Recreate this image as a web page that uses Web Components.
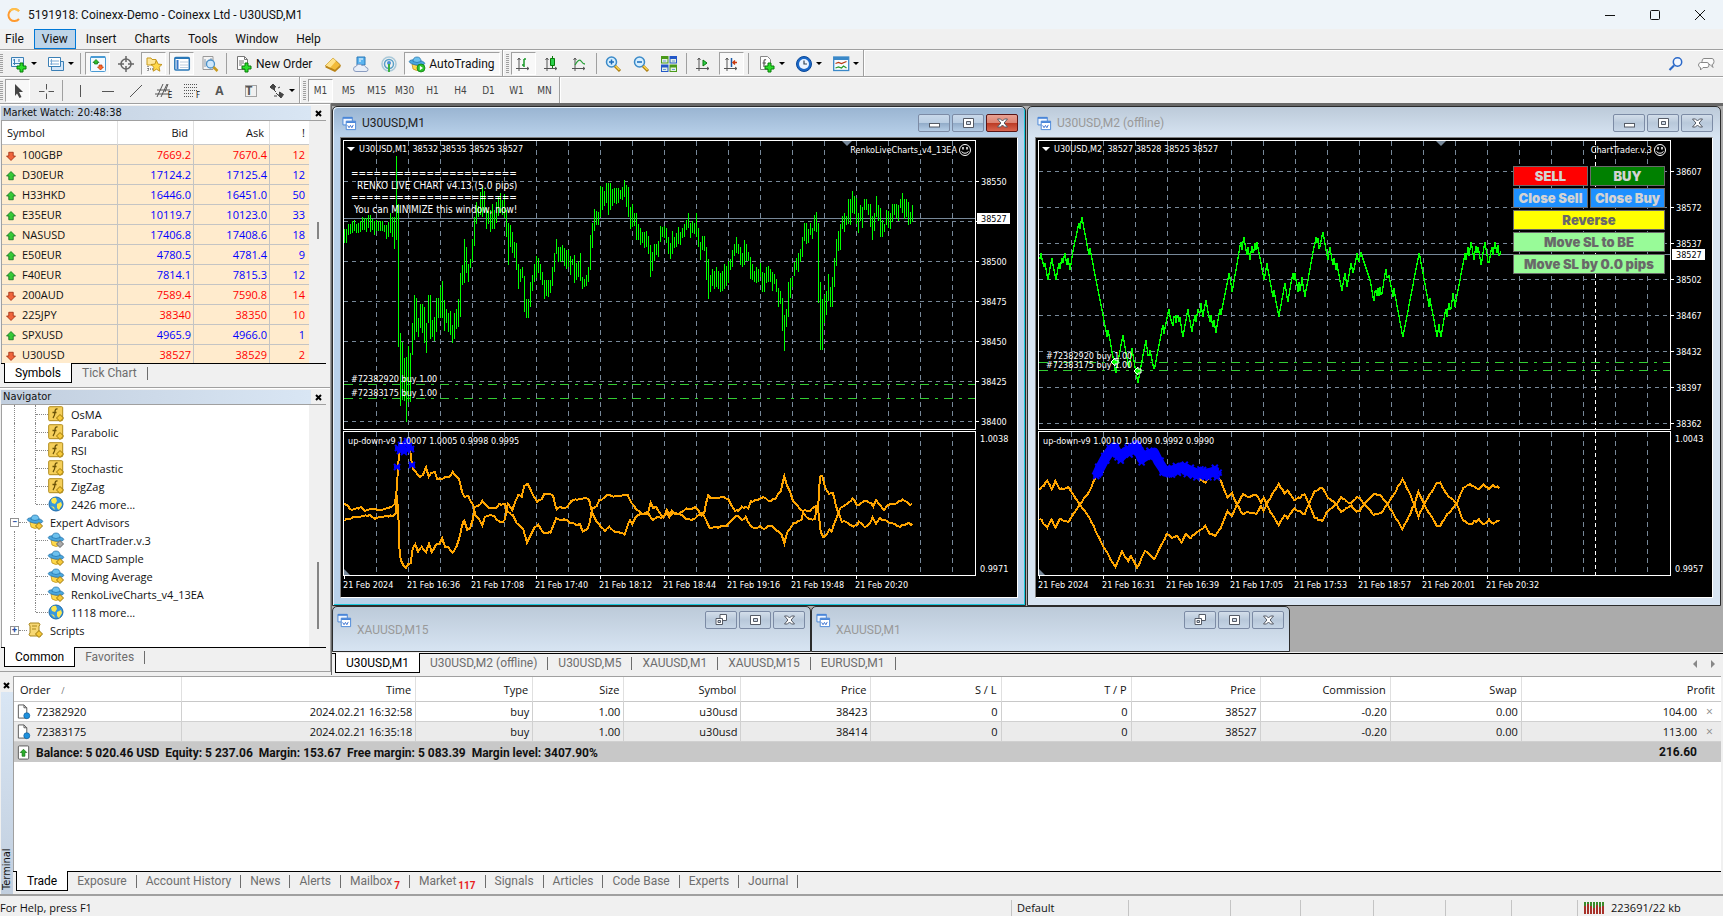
<!DOCTYPE html>
<html lang="en">
<head>
<meta charset="utf-8">
<title>5191918: Coinexx-Demo - Coinexx Ltd - U30USD,M1</title>
<style>
  html, body { margin: 0; height: 100%; }
  body { background: #f0f0f0; overflow: hidden; }
</style>
</head>
<body>
<trading-app></trading-app>
<script>
const UI = 'Roboto,"Open Sans",sans-serif';
const DATA = '"Open Sans","Noto Sans",sans-serif';
const TAHOMA = '"DejaVu Sans Condensed","DejaVu Sans",sans-serif';

function component(name, css, html, setup) {
  customElements.define(name, class extends HTMLElement {
    constructor() {
      super();
      this.attachShadow({ mode: 'open' });
    }
    connectedCallback() {
      if (this.shadowRoot.childNodes.length) return;
      const body = typeof html === 'function' ? html(this) : html;
      const t = document.createElement('template');
      t.innerHTML = `<style>*{box-sizing:border-box}button{font:inherit;color:inherit;border:0;padding:0;margin:0;background:none}${css}</style>${body}`;
      this.shadowRoot.append(t.content.cloneNode(true));
      if (setup) setup(this, this.shadowRoot);
    }
  });
}

/* ---------- icons ---------- */
const axes = '<path d="M4 2v13M1 12.500h13M2.500 4L4 2l1.500 2M12 11l2 1.500-2 1.500" fill="none" stroke="#555"/>';
const plus = '<path d="M9 7h3v3h3v3h-3v3h-3v-3h-3v-3h3z" fill="#2be02b" stroke="#087a08"/>';
const hat = '<path d="M3 8q5 3 10 0l-1 5q-4 3-8 0z" fill="#ffd84a" stroke="#b78a10" stroke-width=".7"/><ellipse cx="8" cy="6.500" rx="7.800" ry="2.600" transform="rotate(8 8 6.500)" fill="#4aa6dc" stroke="#1e6ea8" stroke-width=".7"/><path d="M4 5.500q0-4.500 4-4.500t4 4.500q-4 2-8 0z" fill="#6cc1ee" stroke="#1e6ea8" stroke-width=".7"/>';
const chartWin = '<path d="M1 1.500h10v8H1z" fill="#eef5ff" stroke="#4a86d8"/><path d="M1 2h10" stroke="#4a86d8" stroke-width="2"/><path d="M4.500 5.500h10v9h-10z" fill="#fff" stroke="#4a86d8"/><path d="M4.500 6.500h10" stroke="#4a86d8" stroke-width="2"/><path d="M6 10l1.500 2.500 1.500-2.500 1.500 2.500 1.500-3" fill="none" stroke="#3a70d0"/>';
const glass = '<circle cx="6.500" cy="6" r="5" fill="#d6efff" stroke="#3b8ac8" stroke-width="1.500"/><path d="M10 10l5 5" stroke="#a87a10" stroke-width="3"/><path d="M10.500 10l4 4" stroke="#ffd84a" stroke-width="1.500"/>';
const ICONS = {
  logo: '<path d="M13 4.200A6 6 0 1 0 13 12" fill="none" stroke="#ff9a2e" stroke-width="2"/><path d="M4 3.700A6 6 0 0 1 13 4.200" fill="none" stroke="#ffc04a" stroke-width="2"/>',
  newchart: '<path d="M.5 1.500h12v9H.5z" fill="#e8f4ff" stroke="#3b7fb5"/><path d="M3.500 3v6M2 7.500h9M2 4h2M8 3v3" stroke="#3b7fb5"/>' + plus,
  profiles: '<path d="M3.500 5.500h12v9h-12z" fill="#d4e6f8" stroke="#3b7fb5"/><path d="M.5 1.500h12v9H.5z" fill="#fff" stroke="#3b7fb5"/><path d="M3.500 3v6M2 8h9M2 5h9" stroke="#7aa9d4"/>',
  market: '<rect x=".5" y=".5" width="15" height="15" rx="1" fill="#f4faff" stroke="#4a9bd4"/><path d="M1 1h14" stroke="#4a9bd4" stroke-width="2"/><path d="M6 3.500l3 3-1.500 0v1.500h-3V6.500H3z" fill="#2bc02b" stroke="#0a6a0a" stroke-width=".7"/><path d="M10.500 14l-3-3h1.500V9h3v2h1.500z" fill="#ff6a2a" stroke="#b43508" stroke-width=".7"/>',
  cross: '<circle cx="8" cy="8" r="5" fill="none" stroke="#666" stroke-width="1.500"/><path d="M8 0v6M8 10v6M0 8h6M10 8h6" stroke="#666" stroke-width="1.500"/>',
  navstar: '<path d="M1 2h4l1 1.500h4V9H1z" fill="#ffe79a" stroke="#c79a1e"/><path d="M2 10v6M2 13h5" stroke="#444" stroke-dasharray="1 1"/><path d="M10.500 4.500l1.600 3.600 3.900.4-2.900 2.700.8 4-3.400-2-3.400 2 .8-4L5 8.500l3.900-.4z" fill="#ffd84a" stroke="#b8860b" stroke-width=".8"/>',
  terminal: '<rect x=".8" y="1.500" width="14.500" height="12.500" rx="1" fill="#fff" stroke="#2a78b8" stroke-width="1.500"/><path d="M1 2.500h14" stroke="#2a78b8"/><path d="M2.500 4h2v9h-2z" fill="#3a78c8"/><path d="M6 6h8M6 9h8M6 11.500h8" stroke="#bcd"/>',
  tester: '<path d="M1 .5h10v13H1z" fill="#f4f4f4" stroke="#999"/><path d="M3 3v8M5 5v5M9 2v4" stroke="#89a"/><circle cx="8.500" cy="8" r="4" fill="#cfe8fb" stroke="#4a90c8" stroke-width="1.300"/><path d="M11.500 11l4 4" stroke="#c79a1e" stroke-width="2.500"/>',
  order: '<path d="M1.500.5h7l3 3v10h-10z" fill="#fff" stroke="#777"/><path d="M8.500.5v3h3M3 5h5M3 7h5M3 9h3" fill="none" stroke="#777"/>' + plus,
  gold: '<path d="M.5 9.500L8 2l7.500 7L10 14.500z" fill="#f2bb3a" stroke="#a87a10" stroke-width=".8"/><path d="M.5 9.500L8 2l3 3-6 7z" fill="#ffe28a"/><path d="M.5 9.500v2L10 16l5.500-5v-2L10 14z" fill="#b98216"/>',
  cloud: '<path d="M4 1h8v8H4z" fill="#5ab4f0" stroke="#2a78b8"/><path d="M6 3h4M6 5h2" stroke="#fff"/><path d="M3 15.500a2.500 2.500 0 0 1 0-5 3.500 3.500 0 0 1 6-1 3 3 0 0 1 4 2 2 2 0 0 1 0 4z" fill="#e8eef8" stroke="#8a9cc0"/>',
  signal: '<circle cx="8" cy="8" r="7" fill="none" stroke="#a9c8d8" stroke-width="1.500"/><circle cx="8" cy="8" r="4.500" fill="none" stroke="#5aa0c8" stroke-width="1.500"/><circle cx="8" cy="7" r="2" fill="#4a90d8"/><path d="M8 8v8" stroke="#3cb043" stroke-width="2"/>',
  auto: hat + '<circle cx="12" cy="12" r="4" fill="#2bc02b" stroke="#0a7a0a" stroke-width=".7"/><path d="M10.800 9.800l3.200 2.200-3.200 2.200z" fill="#fff"/>',
  bars: axes + '<path d="M9 3v8M11 3h-2M7 9h2" stroke="#1a9a2a" stroke-width="1.500" fill="none"/>',
  candles: axes + '<path d="M9.500 0v12" stroke="#0a7a0a"/><path d="M7.500 2.500h4v7h-4z" fill="#2bd04b" stroke="#0a7a0a"/>',
  line: axes + '<path d="M4 9q4-7 6-4t4 3" fill="none" stroke="#2aa03a" stroke-width="1.300"/>',
  zoomin: glass + '<path d="M4 6h5M6.500 3.500v5" stroke="#1a6ab8" stroke-width="1.500"/>',
  zoomout: glass + '<path d="M4 6h5" stroke="#1a6ab8" stroke-width="1.500"/>',
  tile: '<path d="M0 0h7.500v7.500H0z" fill="#4a9a1a"/><path d="M8.500 0H16v7.500H8.500z" fill="#2458c8"/><path d="M0 8.500h7.500V16H0z" fill="#2458c8"/><path d="M8.500 8.500H16V16H8.500z" fill="#4a9a1a"/><path d="M1 3h5.500v3.500H1zM9.500 3H15v3.500H9.500zM1 11.500h5.500V15H1zM9.500 11.500H15V15H9.500z" fill="#e4f0e4"/><path d="M2 5h3M11 5h3M2 13.500h3M11 13.500h3" stroke="#6a9ad8"/>',
  scroll: axes + '<path d="M8 4l4 3-4 3z" fill="#2bd04b" stroke="#0a7a0a"/>',
  shift: axes + '<path d="M8.500 2v9" stroke="#1a5aa8" stroke-width="1.500"/><path d="M14 6.500h-4M12 4.500l-2 2 2 2" fill="none" stroke="#c83a10" stroke-width="1.500"/>',
  indicators: '<path d="M1.500.5h7l3 3v10h-10z" fill="#fff" stroke="#888"/><path d="M7 4q-2-1-2 1.500V11M3.500 7H7" fill="none" stroke="#555" stroke-width="1.200"/>' + plus,
  clock: '<circle cx="8" cy="8" r="7.500" fill="#1a68c8" stroke="#0a4898"/><circle cx="8" cy="8" r="5" fill="#eaf4ff"/><path d="M8 4.500V8h3" fill="none" stroke="#345" stroke-width="1.200"/>',
  template: '<rect x=".7" y="1" width="15" height="13.500" fill="#f8fbff" stroke="#3a88c8" stroke-width="1.300"/><path d="M1 2.500h14" stroke="#3a88c8" stroke-width="3"/><path d="M2.500 7.500l3-1 3 1 5-2" fill="none" stroke="#b83a10" stroke-width="1.200"/><path d="M2.500 12l3-1 3 1 2-2 3 2" fill="none" stroke="#2a9a2a" stroke-width="1.200"/>',
  cursor: '<path d="M5 1l8 8H9l2.500 5-2 1L7 10.500 5 13z" fill="#444"/>',
  thincross: '<path d="M8.500 1v5.500M8.500 10.500V16M1 8.500h5.500M10.500 8.500H16" stroke="#555" fill="none"/>',
  vline: '<path d="M8.500 2v12" stroke="#555"/>', hline: '<path d="M2 8.500h12" stroke="#555"/>',
  diag: '<path d="M2 14L14 2" stroke="#555" fill="none"/>',
  channel: '<path d="M0 11h14M2 7h13M2 14L8 1M6 14l6-13M10 9l3-8" stroke="#555" fill="none"/>',
  fibo: '<path d="M1 1.500h14M1 4.500h14M1 7.500h14M1 10.500h9M1 13.500h9" stroke="#555" stroke-dasharray="1 1"/>',
  textbox: '<path d="M2.500 2.500h11v11h-11z" fill="none" stroke="#555" stroke-dasharray="1 1"/>',
  arrows: '<path d="M4 1l3 3H5.500v3L2 5 1 4zM12 15l-3-3h1.500V9l4 2.500zM5 7l2 2M9 12l-2-2" fill="#444" stroke="#444"/><path d="M9 5l2-1M5 13l3 0" stroke="#444"/>',
  find: '<circle cx="9.500" cy="6" r="4.200" fill="#f4f8ff" stroke="#2a68c8" stroke-width="1.500"/><path d="M6 9.500L1.500 14" stroke="#2a68c8" stroke-width="2.200"/>',
  chat: '<path d="M6 2.500h8q2 0 2 3t-2 3l1 3-3-3H6q-2 0-2-3t2-3z" fill="#fafafa" stroke="#888"/><path d="M2.500 6.500H9q2 0 2 2.500t-2 2.500H5L2.500 14v-2.500Q.5 11 .5 9t2-2.500z" fill="#fff" stroke="#888"/>',
  up: '<path d="M8 2l6 6h-3v5H5V8H2z" fill="#37c837" stroke="#0a6a1a"/>',
  down: '<path d="M8 14l6-6h-3V3H5v5H2z" fill="#f0643a" stroke="#98240a"/>',
  indicator: '<rect x=".7" y=".7" width="14" height="14" rx="1" fill="#f5cf5a" stroke="#b08a1a"/><path d="M9.500 3q-2.500-.5-2.500 3T5 12M4.500 6.500h4" fill="none" stroke="#6a5208" stroke-width="1.300"/><path d="M12 8.500l3.500 3.500-3.500 3.500L8.500 12z" fill="#f7c93a" stroke="#9a7608"/>',
  globe: '<circle cx="8" cy="8" r="7" fill="#3a98dc" stroke="#1a68a8"/><path d="M3 4q2-3 5-2l1 3-2 3-3-1zM9 8l4-2 1 3-3 5-2-2zM3 10l3 1 1 3z" fill="#ffe84a"/>',
  expert: hat + '<path d="M12 8.500l3.500 3.500-3.500 3.500L8.500 12z" fill="#f7c93a" stroke="#9a7608"/>',
  expertoff: hat + '<path d="M12 8.500l3.500 3.500-3.500 3.500L8.500 12z" fill="#aaa" stroke="#666"/>',
  script: '<path d="M3 1h9q2 2 0 3v7l2 3H3q-2-2 0-3V4Q1 2 3 1z" fill="#f7d874" stroke="#a8861e"/><path d="M5 4h5M5 7h4" stroke="#a8861e"/><path d="M12 8.500l3.500 3.500-3.500 3.500L8.500 12z" fill="#f7c93a" stroke="#9a7608"/>',
  chart: chartWin,
  doc: '<path d="M2.500 1h6l3 3v11h-9z" fill="#fff" stroke="#555"/><path d="M8.500 1v3h3" fill="none" stroke="#555"/><circle cx="11.500" cy="12.500" r="3.200" fill="#1e90dc" stroke="#0a5a98" stroke-width=".7"/>',
  balance: '<rect x="2.500" y="1" width="11" height="14" rx="1" fill="#fff" stroke="#555"/><path d="M8 4.500l3.500 3.500H9.500v4h-3V8H4.500z" fill="#2bb02b" stroke="#0a6a0a" stroke-width=".7"/>',
  smile: '<circle cx="8" cy="8" r="5.500" fill="none" stroke="#fff"/><path d="M6 5v2.500M10 5v2.500" stroke="#fff" stroke-width="1.500"/><path d="M4.500 9.500q3.500 3.500 7 0" fill="none" stroke="#fff"/>',
  min: '<rect x="3.500" y="8.500" width="10" height="3.500" fill="#fff" stroke="#555b66"/>',
  max: '<path d="M3.500 3.500h10v9h-10z" fill="#fff" stroke="#555b66"/><path d="M6.500 6.500h4v3h-4z" fill="#cfdae8" stroke="#555b66"/>',
  restore: '<path d="M7 2.500h6.500v6H7z" fill="#fff" stroke="#555b66"/><path d="M3 6.500h6.500v6H3z" fill="#fff" stroke="#555b66"/><path d="M5 8.500h2.500v2H5z" fill="#cfdae8" stroke="#555b66"/>',
  close: '<path d="M3.500 4h3l2 2 2-2h3l-3.400 4 3.400 4h-3l-2-2-2 2h-3l3.400-4z" fill="#fff" stroke="#555b66"/>',
  traffic: '<path d="M1 2v12M4 2v12M7 2v12M10 2v12M13 2v12M16 2v12M19 2v12" stroke="#3a8a2a" stroke-width="2"/><path d="M1 6v8M4 4v10M7 6v8M10 8v6M13 5v9M16 7v7M19 6v8" stroke="#a8322a" stroke-width="2"/>'
};
component('mt-icon', ':host{display:inline-block;width:16px;height:16px;flex:none}svg{display:block;width:100%;height:100%;overflow:visible}',
  el => `<svg viewBox="0 0 ${el.getAttribute('name') === 'traffic' ? 20 : 16} 16" aria-hidden="true">${ICONS[el.getAttribute('name')] || ''}</svg>`);

/* ---------- title bar and menu ---------- */
component('title-bar', `
  :host{display:flex;height:29px;align-items:center;background:#eef4f9;font:12px ${UI};color:#111;padding:0 1px 0 6px}
  span{margin-left:6px;flex:1}
  button{width:45px;height:28px;display:grid;place-items:center}
  svg{width:12px;height:12px;fill:none;stroke:#111}`,
  `<mt-icon name="logo"></mt-icon><span>5191918: Coinexx-Demo - Coinexx Ltd - U30USD,M1</span>
   <button aria-label="Minimize"><svg><path d="M1 6.500h10"/></svg></button>
   <button aria-label="Maximize"><svg><rect x="1.500" y="1.500" width="9" height="9" rx="1"/></svg></button>
   <button aria-label="Close"><svg><path d="M1 1l10 10M11 1L1 11"/></svg></button>`);

component('menu-bar', `
  :host{display:flex;height:20px;gap:2px;background:#f0f0f0;font:12px ${UI};color:#111}
  button{height:20px;padding:0 7px;border:1px solid transparent}
  button:first-of-type{padding-left:4px}
  .on{background:#bdd4e9;border-color:#0078d7}`,
  ['File', 'View', 'Insert', 'Charts', 'Tools', 'Window', 'Help'].map(m => `<button class="${m === 'View' ? 'on' : ''}">${m}</button>`).join(''));

/* ---------- toolbars ---------- */
component('tool-button', `
  :host{display:block;flex:none;height:23px;padding:0 2px 0 1px}
  button{height:23px;min-width:25px;display:flex;align-items:center;justify-content:center;border:1px solid transparent;font:12px ${UI};color:#111;gap:4px}
  :host([frame]) button{font:10px ${TAHOMA};color:#444}
  :host([wide]) button{padding:0 4px;justify-content:flex-start}
  :host([drop]) button{padding-left:4px;width:34px;gap:4px}
  :host([pressed]) button{background:#f8f8f8;border-color:#a0a0a0 #fff #fff #a0a0a0}
  i{border:3px solid transparent;border-top-color:#000;border-bottom:0}
  sub{font:8px ${TAHOMA};margin:9px 0 0 -7px}
  b{font:bold 12px ${DATA};color:#555} mt-icon+b{margin-left:-17px}`,
  el => {
    const a = n => el.getAttribute(n), text = el.textContent.trim();
    return `<button aria-label="${a('label') || text || a('icon') || ''}">${a('icon') ? `<mt-icon name="${a('icon')}"></mt-icon>` : ''}${a('sub') ? `<sub>${a('sub')}</sub>` : ''}${a('glyph') ? `<b>${a('glyph')}</b>` : ''}<slot></slot>${el.hasAttribute('drop') ? '<i></i>' : ''}</button>`;
  });
const tb = (icon, extra = '', text = '') => `<tool-button icon="${icon}" ${extra}>${text}</tool-button>`;
const sep = '<hr>';
component('tool-bars', `
  :host{display:block;background:#f0f0f0}
  .row{display:flex;height:27px;border-top:1px solid #a0a0a0;box-shadow:inset 0 1px #fff}
  .bar{display:flex;align-items:center;padding-top:1px;border-right:1px solid #a0a0a0;box-shadow:1px 0 #fff}
  .grip{width:3px;height:20px;margin-right:1px;background:repeating-linear-gradient(#a0a0a0 0 1px,#f0f0f0 1px 2px)}
  .bar+.bar .grip{margin-left:3px}
  hr{width:1px;height:21px;margin:0 3px 0 2px;border:0;background:#a0a0a0}
  .fill{flex:1}.end{display:flex;align-items:center;gap:14px;padding:2px 9px 0 0}
  .end button{height:16px}`,
  `<div class="row"><div class="bar"><div class="grip"></div>${tb('newchart', 'drop')}${tb('profiles', 'drop')}${sep}
    ${tb('market', 'pressed')}${tb('cross')}${tb('navstar', 'pressed')}${tb('terminal', 'pressed')}${tb('tester')}${sep}
    ${tb('order', 'wide', 'New Order')}${tb('gold')}${tb('cloud')}${tb('signal')}${tb('auto', 'wide pressed', 'AutoTrading')}</div>
   <div class="bar"><div class="grip"></div>${tb('bars', 'pressed')}${tb('candles')}${tb('line')}${sep}
    ${tb('zoomin')}${tb('zoomout')}${tb('tile')}${sep}${tb('scroll')}${tb('shift', 'pressed')}${sep}
    ${tb('indicators', 'drop')}${tb('clock', 'drop')}${tb('template', 'drop')}</div>
   <div class="fill"></div><div class="end"><button aria-label="Search"><mt-icon name="find"></mt-icon></button><button aria-label="Chat"><mt-icon name="chat"></mt-icon></button></div></div>
   <div class="row"><div class="bar"><div class="grip"></div>${tb('cursor', 'pressed')}${tb('thincross')}${sep}
    ${tb('vline')}${tb('hline')}${tb('diag')}${tb('channel', 'sub="E"')}${tb('fibo', 'sub="F"')}
    <tool-button glyph="A" label="Text"></tool-button>${tb('textbox', 'glyph="T"')}${tb('arrows', 'drop')}</div>
   <div class="bar"><div class="grip"></div>${['M1', 'M5', 'M15', 'M30', 'H1', 'H4', 'D1', 'W1', 'MN'].map((t, i) => `<tool-button frame ${i ? '' : 'pressed'}>${t}</tool-button>`).join('')}</div></div>`);

/* ---------- tab strip shared by every panel ---------- */
component('tab-strip', `
  :host{display:flex;height:20px;flex:none;border-top:1px solid #000;padding-left:3px;font:12px ${UI};color:#6d6d6d;background:#f0f0f0}
  button{height:20px;margin-top:-1px;padding:0 10px;position:relative;white-space:nowrap}
  :host([tight]) button{padding:0 9px}
  .on,:host([tight]) .on{background:#fff;color:#000;border:1px solid #000;border-top:0;padding:0 10px;height:20px}
  hr{width:1px;height:13px;margin:3px 0 0;border:0;background:#6d6d6d}
  sub{font:bold 10px ${UI};color:#e81e1e;vertical-align:-4px;line-height:0;margin-left:2px}
  nav{margin-left:auto;display:flex;gap:14px;align-items:center;padding-right:8px}
  nav i{border:4px solid transparent;border-left:0;border-right-color:#888}
  nav i+i{border:4px solid transparent;border-right:0;border-left-color:#888}`,
  el => el.getAttribute('items').split('|').map((t, i) => {
    const [name, n] = t.split('#');
    return `<button role="tab" class="${i ? '' : 'on'}">${name}${n ? `<sub>${n}</sub>` : ''}</button>${i ? '<hr>' : ''}`;
  }).join('') + (el.hasAttribute('scroll') ? '<nav><i></i><i></i></nav>' : ''));

/* ---------- docked panel ---------- */
component('dock-panel', `
  :host{display:flex;flex-direction:column;border-top:1px solid #a0a0a0;border-right:1px solid #a0a0a0;box-shadow:inset 0 1px #fff;padding:2px 4px 4px 1px;background:#f0f0f0}
  header{display:flex;height:14px;flex:none;font:11px/13px ${TAHOMA};color:#111}
  header span{flex:1;padding-left:2px;background:linear-gradient(90deg,#c1cede,#d9e6f4)}
  header button{width:15px;display:grid;place-items:center}
  svg{width:7px;height:7px;stroke:#000;stroke-width:2;fill:none}
  .body{flex:1;min-height:0;display:flex;overflow:hidden;background:#fff;border:1px solid #a0a0a0;border-width:1px 0 0 1px}
  .body ::slotted(*){flex:1}
  .scroll{width:17px;background:#f0f0f0;display:flex;justify-content:center}
  .scroll i{width:2px;background:#858585}
  :host([kind=market]) .scroll i{height:17px;margin-top:101px}
  :host([kind=nav]) .scroll i{height:67px;margin-top:157px}`,
  el => `<header><span>${el.getAttribute('caption')}</span><button aria-label="Close"><svg><path d="M1 1l5 5M6 1L1 6"/></svg></button></header>
   <div class="body"><slot></slot><div class="scroll"><i></i></div></div><tab-strip items="${el.getAttribute('tabs')}"></tab-strip>`);

const QUOTES = [['100GBP', '7669.2', '7670.4', 12, 0], ['D30EUR', '17124.2', '17125.4', 12, 1], ['H33HKD', '16446.0', '16451.0', 50, 1], ['E35EUR', '10119.7', '10123.0', 33, 1], ['NASUSD', '17406.8', '17408.6', 18, 1], ['E50EUR', '4780.5', '4781.4', 9, 1], ['F40EUR', '7814.1', '7815.3', 12, 1], ['200AUD', '7589.4', '7590.8', 14, 0], ['225JPY', '38340', '38350', 10, 0], ['SPXUSD', '4965.9', '4966.0', 1, 1], ['U30USD', '38527', '38529', 2, 0]];
component('market-watch', `
  :host{display:block}
  table{width:100%;table-layout:fixed;border-collapse:separate;border-spacing:0;font:11px ${DATA};color:#111}
  th{height:24px;font-weight:400;background:#fff;border-right:1px solid #e0e0e0;border-bottom:1px solid #c8c8c8;text-align:right;padding:0 5px}
  th:first-child{text-align:left;padding-left:5px}
  td{height:20px;padding:0 2px;background:#ffebcd;border-right:1px solid #c4c4c4;border-bottom:1px solid #c4c4c4;text-align:right;line-height:19px}
  td:first-child{text-align:left;padding-left:3px;white-space:nowrap}
  td:last-child,th:last-child{padding-right:4px;border-right:0}
  mt-icon{width:12px;height:12px;vertical-align:-3px;margin-right:5px}
  .u td{color:#0000ff}.d td{color:#ff0000}tr td:first-child{color:#111}`,
  `<table><colgroup><col><col style="width:76px"><col style="width:76px"><col style="width:39px"></colgroup>
   <thead><tr><th>Symbol</th><th>Bid</th><th>Ask</th><th>!</th></tr></thead><tbody>
   ${QUOTES.map(q => `<tr class="${q[4] ? 'u' : 'd'}"><td><mt-icon name="${q[4] ? 'up' : 'down'}"></mt-icon>${q[0]}</td><td>${q[1]}</td><td>${q[2]}</td><td>${q[3]}</td></tr>`).join('')}</tbody></table>`);

const TREE = [['indicator', 'OsMA'], ['indicator', 'Parabolic'], ['indicator', 'RSI'], ['indicator', 'Stochastic'], ['indicator', 'ZigZag'], ['globe', '2426 more...', 'last'], ['expert', 'Expert Advisors', 'root', '−'], ['expertoff', 'ChartTrader.v.3'], ['expert', 'MACD Sample'], ['expert', 'Moving Average'], ['expert', 'RenkoLiveCharts_v4_13EA'], ['globe', '1118 more...', 'last'], ['script', 'Scripts', 'root end', '+']];
component('nav-tree', `
  :host{display:block;font:11px ${DATA};color:#111}
  ul{list-style:none;margin:0;padding:0}
  li{display:grid;grid-template-columns:13px 21px 12px 16px 1fr;height:18px;align-items:center}
  li.root{grid-template-columns:25px 16px 1fr}
  .v,.w{align-self:stretch;border-right:1px dotted #888}
  .w{height:18px}.last .w{height:9px}
  .h{border-top:1px dotted #888}
  li>span{padding-left:7px;white-space:nowrap}
  .root>span{padding-left:7px}
  .box{margin-left:8px;width:9px;height:9px;border:1px solid #919191;background:#fff;color:#2a4ea0;font:bold 9px/7px ${UI};text-align:center;padding:0}
  .knob{display:flex;align-items:center}.knob::after{content:"";flex:1;border-top:1px dotted #888}`,
  `<ul>${TREE.map(t => (t[2] || '').includes('root')
    ? `<li class="${t[2]}"><div class="knob"><button class="box" aria-label="Toggle">${t[3]}</button></div><mt-icon name="${t[0]}"></mt-icon><span>${t[1]}</span></li>`
    : `<li class="${t[2] || ''}"><i class="v"></i><i class="w"></i><i class="h"></i><mt-icon name="${t[0]}"></mt-icon><span>${t[1]}</span></li>`).join('')}</ul>`);

/* ---------- chart window frame ---------- */
component('mdi-window', `
  :host{display:flex;flex-direction:column;border:1px solid #2b2b2b;border-radius:5px 5px 0 0;padding:0 7px 7px;background:linear-gradient(#bccad9,#d7e4f2 30px);color:#999}
  :host([active]){background:linear-gradient(#99b4d1,#b9d1ea 30px);box-shadow:inset 1px 1px #e8f2fc,inset -1px -1px #19c8dc;color:#222}
  header{display:flex;height:30px;flex:none;align-items:center;font:12px ${UI}}
  header>mt-icon{margin:2px 5px 0 2px;width:15px;height:15px}
  header>span{flex:1;padding-top:2px}
  nav{display:flex;gap:2px;padding-top:1px}
  button{width:32px;height:18px;border:1px solid #7c8ba5;border-radius:2px;display:grid;place-items:center;background:linear-gradient(#d3deea,#b8c8da 50%,#c6d5e6)}
  :host([active]) button{background:linear-gradient(#c9d9ea,#b9cde2 50%,#91abc8 51%,#b5cde6)}
  :host([active]) button:last-child{border-color:#5a1515;background:linear-gradient(#e8a294,#dc8372 50%,#bb3a24 51%,#d9654f)}
  .client{border:1px solid #808080;border-color:#808080 #fff #fff #808080;background:#000}
  :host([mini]){height:46px;padding:0 5px 0 4px;background:linear-gradient(#bccad9,#d7e4f2)}
  :host([mini]) header{height:44px;align-items:flex-start}
  :host([mini]) header>mt-icon{margin:6px 5px 0 0}
  :host([mini]) header>span{padding-top:16px}
  :host([mini]) nav{padding-top:4px}:host([mini]) .client{display:none}`,
  el => `<header><mt-icon name="chart"></mt-icon><span>${el.getAttribute('caption')}</span><nav>
   ${[el.hasAttribute('mini') ? 'restore' : 'min', 'max', 'close'].map(n => `<button aria-label="${n}"><mt-icon name="${n}"></mt-icon></button>`).join('')}</nav></header>
   <div class="client"><slot></slot></div>`);

/* ---------- chart data ---------- */
/* Readings are kept in a finer unit than the drawing; each run carries its own origin and step. */
const num = s => s.trim().split(/[\s,]+/).map(Number);
function trace(...runs) {
  const out = [];
  for (const [ox, oy, kx, ky, s] of runs) {
    const n = num(s);
    for (let i = 0; i < n.length; i += 2) out.push([(n[i] + ox) / kx, (n[i + 1] + oy) / ky]);
  }
  return out;
}
const M1_BARS = num(`388,430 388,428 372,405 372,402 362,398 360,392 372,398 368,398 362,396 352,390 354,390 355,396 346,385 346,396 358,390 362,404 360,392 364,394 364,392 362,394 374,396 376,418 365,412 340,398 352,412 350,446 168,420 312,740 700,918 725,900 775,902 770,965 738,905 758,905 668,765 585,720 594,695 655,712 612,684 612,700 622,730 668,760 585,670 585,716 660,712 652,724 595,696 594,655 560,655 542,655 600,694 626,668 638,695 634,704 675,728 640,718 628,686 598,680 520,650 494,555 418,550 442,520 492,545 478,505 418,485 350,438 305,372 318,350 275,345 260,350 272,335 325,388 332,372 330,396 312,388 330,388 305,370 290,348 280,340 300,345 282,355 330,410 370,494 375,440 395,460 425,475 430,510 492,566 508,545 500,535 528,636 598,654 596,655 545,620 525,572 492,545 468,535 474,518 492,540 515,555 540,596 540,588 540,590 540,578 500,558 460,516 418,462 442,485 440,485 434,484 444,498 450,506 450,500 468,526 476,496 466,548 490,540 482,532 460,542 530,566 538,562 525,558 500,545 405,510 370,445 326,392 332,374 335,375 258,350 262,330 274,318 250,310 248,345 250,330 268,318 265,310 265,312 265,310 270,298 262,300 240,290 255,320 260,350 320,388 312,380 340,378 340,420 372,420 384,436 396,430 396,445 392,440 408,462 436,532 455,512 432,482 432,465 422,470 378,425 382,412 378,415 385,430 412,462 430,476 392,462 412,445 400,440 380,432 395,435 385,415 372,410 360,390 340,385 368,415 362,400 368,402 340,412 385,442 425,480 408,450 408,452 440,540 478,596 525,575 508,558 512,566 502,562 512,568 518,576 512,574 492,568 498,558 482,548 478,510 450,502 432,468 410,460 432,462 442,494 458,500 420,494 432,484 455,482 472,538 492,540 512,545 502,550 508,545 488,532 515,576 520,576 502,548 498,545 508,545 515,572 522,552 538,575 565,620 572,612 595,692 645,752 628,680 545,652 535,595 532,562 485,528 475,510 460,515 448,485 412,470 370,422 368,432 388,430 370,404 385,418 345,394 336,395 370,610 546,750 598,750 585,670 572,645 522,602 560,620 530,620 475,562 418,498 392,452 372,450 348,388 340,396 348,375 298,372 298,375 274,340 288,342 295,372 340,398 315,362 322,385 296,330 298,330 312,345 312,380 348,420 338,392 288,350 315,362 325,412 360,410 372,395 330,375 334,385 338,388 312,366 312,345 312,355 315,362 296,325 280,340 298,358 298,352 305,374 336,372 315,365`);
const M2_LINE = trace(
  [-39, -120, 3, 3, `43,478 46,460 55,500 58,488 67,540 79,475 91,540 100,490 103,508 109,475 112,490 118,460 124,495 127,475 134,510 142,455 160,370 163,388 169,350 190,465 193,445 245,710 248,690 271,820 292,705 310,805 319,745 337,850 361,720 369,775 373,750 385,805 388,800 412,675 415,700 430,628 433,645 442,680 447,640 451,670 456,640 460,670 462,645 472,712 487,628 499,695 508,645 511,665 517,630 523,640 526,610 532,650 541,600 553,665 556,645 562,680 565,660 571,698 583,628 586,645 611,518 620,575 646,425 649,450 655,410 664,465 667,440 673,480 679,440 684,465 688,428 693,455 694,425 716,540 724,490 742,590 745,570 760,650 778,550 787,605 802,518 805,540 808,520 818,575 820,545 824,575 829,532 838,590 862,460 872,410 875,430 877,412 881,450 892,395 907,480 913,440 922,495 925,475 932,510 934,490 949,572 958,520 965,560 976,490 983,518 995,460 999,488 1006,458 1035,545`],
  [996, -120, 3, 3, `10,605 15,565 19,590 22,562 25,590 28,562 33,590 46,505 51,540 54,520 68,590 70,565 97,712 146,458 176,620 178,595 200,712 205,672 211,712 226,625 229,650 235,610 240,635 248,578 253,620 284,458 287,482 292,440 295,468 302,425 310,480 316,438 319,460 323,440 332,495 343,425 354,495 364,440 367,465 374,425 379,460 382,435 386,470 389,462`]);
const M1_A = trace(
  [-39, -153, 3, 3, `43,372 50,375 60,388 75,386 85,386 95,382 105,392 120,388 135,386 150,390 165,386 185,380 195,370 201,320 204,260 208,215 212,200 222,195 232,200 240,205 244,240 250,268 262,282 270,290 278,285 288,262 296,290 304,278 314,275 322,298 335,298 345,290 358,290 368,275 378,288 388,300 396,335 403,350 415,348 422,365 430,375 436,405 446,415 457,436 465,410 480,405 492,407 505,422 518,426 525,418 530,385 534,372 540,380 547,390 556,365 565,345 575,350 583,318 593,312 602,330 612,350 622,366 635,358 643,342 660,342 670,350 680,388 690,380 705,384 718,372 730,360 748,358 768,354 778,362 786,395 800,425 812,440 825,452 838,440 850,452 865,456 884,464 895,430 900,420 907,432 915,415 925,405 945,400 955,395 962,368 970,385 978,380 990,400 1000,412 1010,400 1018,412 1025,392`],
  [981, -153, 3, 3, `10,398 25,402 50,385 62,388 75,382 85,390 90,400 103,398 108,370 115,345 125,355 140,355 155,350 175,358 185,378 195,392 205,392 215,380 235,385 243,364 265,360 280,352 295,362 315,358 325,340 333,332 343,288 350,315 360,335 370,365 385,380 397,392 410,412 435,418 440,378 444,400 446,350 450,290 457,288 465,322 478,342 488,338 498,378 505,398 515,425 535,430 550,440 562,435 566,425 575,430 585,442 600,430 608,412 618,432 630,415 645,420 660,430 675,432 690,440 710,432 727,432`]);
const M1_B = trace(
  [-39, -153, 3, 3, `43,424 55,416 75,412 100,408 120,405 135,416 150,410 170,408 190,408 197,400 200,345 205,400 208,500 212,540 220,556 228,564 235,552 242,550 248,505 256,493 264,515 275,500 288,516 297,490 305,516 318,494 328,492 336,474 345,500 355,502 367,518 380,498 390,465 400,425 403,422 412,450 420,445 428,420 434,380 445,378 457,362 468,375 480,385 495,385 508,372 525,372 532,395 548,405 560,430 580,448 591,488 600,470 615,440 625,434 640,458 662,458 678,415 690,420 710,420 725,430 740,436 750,432 758,455 772,448 780,425 786,385 800,378 808,360 820,355 832,345 850,350 870,348 893,345 905,370 922,390 940,402 955,400 968,420 980,412 1000,412 1010,390 1020,405`],
  [981, -153, 3, 3, `10,400 30,402 50,418 70,418 82,408 100,404 112,430 120,445 150,440 170,438 190,415 200,407 215,420 227,410 240,435 255,445 270,438 282,446 300,438 320,452 335,465 343,490 353,455 372,430 395,418 400,392 420,392 437,378 446,400 452,455 460,472 472,460 478,448 485,455 495,425 505,400 515,380 530,372 548,355 560,375 575,368 590,362 603,368 610,380 618,360 632,378 642,390 655,375 680,370 697,358 710,365 720,375 727,372`]);
const SPREAD = num(`33,43 50,70 60,45 68,70 78,45 98,52 108,30 123,0 145,40 158,78 180,135 203,188 218,140 232,170 238,155 252,190 270,140 290,165 305,125 318,90 330,100 342,95 352,115 362,88 372,102 390,80 405,65 415,88 428,95 440,70 455,20 465,35 476,0 490,30 500,22 520,28 530,5 536,20 543,0 555,30 570,62 583,32 590,42 605,12 628,30 638,0 650,40 668,50 680,20 700,0 710,22 722,10 733,3 745,22 752,20 762,0 783,32 800,25 815,0 848,75 875,0 884,38 896,0 925,65 933,65 948,30 970,0 985,50 1000,60 1020,45 1030,60 1042,45 1052,58 1066,48`);
const mirror = sign => {
  const out = [];
  for (let i = 0; i < SPREAD.length; i += 2) {
    const under = sign < 0 && SPREAD[i] > 162 && SPREAD[i] < 385;
    if (!under) out.push([SPREAD[i] / 2.2464 - 13, (313 + sign * SPREAD[i + 1]) / 3 - 31]);
    else out.push(null);
  }
  return out;
};
const BAND = trace([-29.2, -93, 2.2464, 3, `160,228 168,205 178,180 190,155 200,142 208,160 215,170 226,155 238,150 250,135 262,175 275,165 290,158 300,185 315,215 330,212 350,202 368,210 385,220 400,222 412,220 422,216 435,218`]);

/* Small irregular steps give the averaged lines their stair-like look. */
function wobble(points) {
  const out = [];
  let seed = 7;
  for (let i = 0; i < points.length; i++) {
    const p = points[i], q = points[i + 1];
    if (!p) { out.push(null); continue; }
    out.push(p);
    if (!q) continue;
    for (let x = p[0] + 2; x < q[0] - 1; x += 2) {
      seed = (seed * 16807) % 2147483647;
      out.push([x, p[1] + (q[1] - p[1]) * (x - p[0]) / (q[0] - p[0]) + (seed / 2147483647 - .5) * 2]);
    }
  }
  return out;
}
const toPath = pts => { let pen = 'M'; return pts.map(p => { if (!p) { pen = 'M'; return ''; } const s = pen + p[0].toFixed(1) + ' ' + p[1].toFixed(1); pen = 'L'; return s; }).join(''); };
const crossMark = (x, y, r = 3) => `M${x - r} ${y - r}l${2 * r} ${2 * r}M${x + r} ${y - r}l${-2 * r} ${2 * r}M${x - r} ${y}h${2 * r}`;

const CHARTS = {
  m1: {
    head: 'U30USD,M1\u00a0\u00a038532 38535 38525 38527', ea: 'RenkoLiveCharts_v4_13EA', first: 41, step: 40,
    prices: ['38550', '', '38500', '38475', '38450', '38425', '38400'], price: 78, orders: [[244, 242], [258, 256]], marker: 504,
    sub: 'up-down-v9 1.0007 1.0005 0.9998 0.9995', hi: '1.0038', lo: '0.9971',
    times: ['21 Feb 2024', '21 Feb 16:36', '21 Feb 17:08', '21 Feb 17:40', '21 Feb 18:12', '21 Feb 18:44', '21 Feb 19:16', '21 Feb 19:48', '21 Feb 20:20']
  },
  m2: {
    head: 'U30USD,M2\u00a0\u00a038527 38528 38525 38527', ea: 'ChartTrader.v.3', first: 31, step: 36,
    prices: ['38607', '38572', '38537', '38502', '38467', '38432', '38397', '38362'], price: 114, orders: [[222, 219], [230, 228]], marker: 403,
    sub: 'up-down-v9 1.0010 1.0009 0.9992 0.9990', hi: '1.0043', lo: '0.9957',
    times: ['21 Feb 2024', '21 Feb 16:31', '21 Feb 16:39', '21 Feb 17:05', '21 Feb 17:53', '21 Feb 18:57', '21 Feb 20:01', '21 Feb 20:32']
  }
};
const verticals = Array.from({ length: 40 }, (_, i) => `<line x1="${33.5 + 32 * i}" x2="${33.5 + 32 * i}" y1="1" y2="100%" class="gv"/>`).join('');

function mainPlot(kind, c) {
  let s = verticals;
  c.prices.forEach((_, i) => { const y = c.first + c.step * i + .5; s += `<line x1="1" x2="100%" y1="${y}" y2="${y}" class="gh"/>`; });
  s += `<line x1="1" x2="100%" y1="${c.price + .5}" y2="${c.price + .5}" stroke="#778899"/>`;
  c.orders.forEach(o => { s += `<line x1="1" x2="100%" y1="${o[0] + .5}" y2="${o[0] + .5}" class="ord"/>`; });
  if (kind === 'm1') {
    let d = '';
    for (let i = 0; i < M1_BARS.length; i += 2) d += `M${1.5 + i} ${Math.round((M1_BARS[i] - 120) / 3)}V${Math.round((M1_BARS[i + 1] - 120) / 3)}`;
    s += `<path d="${d}" class="bar"/>`;
  } else {
    let d = '', k = 0;
    const at = x => { while (k < M2_LINE.length - 2 && M2_LINE[k + 1][0] < x) k++; const [a, b] = [M2_LINE[k], M2_LINE[k + 1]]; return a[1] + (b[1] - a[1]) * (x - a[0]) / (b[0] - a[0] || 1); };
    let prev = at(1.5);
    for (let x = 1.5; x < 463; x++) { const y = at(x); d += `M${x} ${Math.round(Math.min(prev, y)) - 1}V${Math.round(Math.max(prev, y)) + 1}`; prev = y; }
    s += `<path d="${d}" class="bar"/><line x1="557.5" x2="557.5" y1="1" y2="100%" stroke="#fff" stroke-dasharray="4 3"/>`;
  }
  s += c.orders.map((o, i) => `<text x="8" y="${o[1]}">#${i ? '72383175' : '72382920'} buy 1.00</text>`).join('');
  if (kind === 'm2') s += '<path d="M73 222l4-4v2h3v4h-3v2zM96 231l4-4v2h3v4h-3v2z" fill="#0f0" stroke="#fff"/>';
  s += `<path d="M4 7h8l-4 4z" fill="#fff"/><text x="16" y="12">${c.head}</text>`;
  if (kind === 'm1') s += `<g class="note"><text x="8" y="37">${'='.repeat(22)}</text><text x="14" y="49">RENKO LIVE CHART v4.13 (5.0 pips)</text><text x="8" y="61">${'='.repeat(22)}</text><text x="11" y="73">You can MINIMIZE this window, now!</text></g>`;
  s += `<path d="M${c.marker - 5} 1h10l-5 5z" fill="#778899"/>`;
  s += `<svg x="100%" overflow="visible"><text x="-19" y="13" text-anchor="end">${c.ea}</text><svg x="-19" y="2" width="16" height="16" viewBox="0 0 16 16">${ICONS.smile}</svg></svg>`;
  return s + '<rect x=".5" y=".5" class="frame"/>';
}
function subPlot(kind, c) {
  let s = verticals;
  if (kind === 'm1') {
    s += `<path d="${toPath(wobble(M1_A))}" class="ind"/><path d="${toPath(wobble(M1_B))}" class="ind"/>`;
    s += `<path d="${[[54, 36], [69, 34], [55, 17], [58, 14], [60, 17], [63, 13], [64, 19], [66, 15], [68, 18], [57, 20], [61, 21], [64, 10]].map(p => crossMark(...p)).join('')}" class="x"/>`;
  } else {
    s += `<line x1="557.5" x2="557.5" y1="1" y2="100%" stroke="#fff" stroke-dasharray="4 3"/>`;
    s += `<path d="${toPath(wobble(mirror(-1)))}" class="ind"/><path d="${toPath(wobble(mirror(1)))}" class="ind"/>`;
    s += `<path d="${toPath(BAND)}" fill="none" stroke="#00f" stroke-width="10" stroke-linejoin="round"/>`;
    s += `<path d="${wobble(BAND).map(p => crossMark(p[0], p[1] + (Math.round(p[0]) % 3 - 1) * 4, 3)).join('')}" class="x"/>`;
  }
  return s + `<text x="5" y="13">${c.sub}</text><path d="M1 138v6h6z" fill="#778899"/><rect x=".5" y=".5" class="frame"/>`;
}
component('chart-view', `
  :host{display:grid;grid-template-columns:1fr 41px;grid-template-rows:291px 145px 21px;padding:2px 0 0 2px;background:#000;color:#fff}
  svg{display:block;width:100%;height:100%;overflow:hidden}
  svg svg{width:16px;height:16px;overflow:visible}
  .main{position:relative;height:290px}.sub{height:145px}
  .axis{grid-column:2;grid-row:1/4}
  text{font:9px ${TAHOMA};fill:#fff}.note text{font-size:10px}
  .gv{stroke:#778899;stroke-dasharray:5 4}.gh{stroke:#778899;stroke-dasharray:4 4}
  .ord{stroke:#32cd32;stroke-dasharray:9 6 3 6}
  .bar{stroke:#0f0;fill:none}.ind{stroke:#ffa500;stroke-width:2;fill:none;shape-rendering:crispEdges}.x{stroke:#00f;stroke-width:2;fill:none}
  .frame{width:calc(100% - 1px);height:calc(100% - 1px);fill:none;stroke:#fff}
  .trade{position:absolute;top:26px;right:6px;display:grid;grid-template-columns:75px 75px;gap:2px;font:900 13px Inter,"Liberation Sans",sans-serif}
  .trade button{height:20px;border:1px solid #696969;color:#d3d3d3;white-space:nowrap}
  .trade .w{grid-column:1/3;color:#696969}`,
  el => {
    const kind = el.getAttribute('kind'), c = CHARTS[kind];
    const axis = c.prices.map((p, i) => { const y = c.first + c.step * i; return `<path d="M0 ${y + .5}h3" stroke="#fff"/><text x="5" y="${y + 4}">${p}</text>`; }).join('')
      + `<rect x="1" y="${c.price - 5}" width="33" height="11" fill="#fff"/><text x="5" y="${c.price + 4}" style="fill:#000">38527</text><text x="4" y="302">${c.hi}</text><text x="4" y="432">${c.lo}</text>`;
    const times = c.times.map((t, i) => `<path d="M${i ? 65.5 + 64 * (i - 1) : 1.5} 0v3" stroke="#fff"/><text x="${64 * i}" y="12">${t}</text>`).join('');
    const trade = kind === 'm2' ? `<div class="trade"><button style="background:red">SELL</button><button style="background:green">BUY</button><button style="background:#1e90ff">Close Sell</button><button style="background:#1e90ff">Close Buy</button><button class="w" style="background:#ff0">Reverse</button><button class="w" style="background:#98fb98">Move SL to BE</button><button class="w" style="background:#98fb98">Move SL by 0.0 pips</button></div>` : '';
    return `<div class="main"><svg>${mainPlot(kind, c)}</svg>${trade}</div><div class="sub"><svg>${subPlot(kind, c)}</svg></div><div class="time"><svg>${times}</svg></div><div class="axis"><svg>${axis}</svg></div>`;
  });

component('mdi-area', `
  :host{display:flex;flex-direction:column;min-width:0;border-top:3px solid #696969;border-left:1px solid #696969;background:#ababab}
  .top{display:grid;grid-template-columns:1fr 1fr;gap:1px;padding:0 2px 0 0}
  .minis{display:flex;flex:1}.minis>*{width:479px}
  .foot{height:23px;background:#f0f0f0;padding-top:1px}`,
  `<div class="top"><mdi-window active caption="U30USD,M1"><chart-view kind="m1"></chart-view></mdi-window>
   <mdi-window caption="U30USD,M2 (offline)"><chart-view kind="m2"></chart-view></mdi-window></div>
   <div class="minis"><mdi-window mini caption="XAUUSD,M15"></mdi-window><mdi-window mini caption="XAUUSD,M1"></mdi-window></div>
   <div class="foot"><tab-strip scroll items="U30USD,M1|U30USD,M2 (offline)|U30USD,M5|XAUUSD,M1|XAUUSD,M15|EURUSD,M1"></tab-strip></div>`);

/* ---------- terminal ---------- */
const COLS = [168, 234, 117, 91, 117, 130, 130, 130, 129, 130, 131, 199];
component('terminal-panel', `
  :host{display:grid;grid-template-columns:13px minmax(0,1fr);background:#f0f0f0;border-bottom:2px solid #a0a0a0}
  aside{display:flex;flex-direction:column;align-items:center}
  aside button{height:16px;padding-top:3px}
  aside svg{width:7px;height:7px;display:block;stroke:#000;stroke-width:2}
  aside span{flex:1;width:12px;writing-mode:vertical-rl;transform:rotate(180deg);font:11px/12px ${TAHOMA};color:#111;padding-top:4px;background:linear-gradient(#c1cede,#d9e6f4)}
  .pane{display:flex;flex-direction:column;background:#fff;border-top:1px solid #a0a0a0;border-left:1px solid #a0a0a0;margin-right:2px;margin-bottom:3px}
  .grid{flex:1}
  table{width:100%;table-layout:fixed;border-collapse:separate;border-spacing:0;font:11px ${DATA};color:#111}
  th{height:25px;font-weight:400;border-right:1px solid #e0e0e0;border-bottom:1px solid #c8c8c8;text-align:right;padding:0 4px}
  td{height:20px;text-align:right;padding:0 3px 0 0;border-right:1px solid #d0d0d0;border-bottom:1px solid #d0d0d0;white-space:nowrap}
  th:first-child{text-align:left;padding-left:6px}
  td:first-child{text-align:left;padding-left:2px}
  td:last-child{border-right:0;padding-right:6px}
  th:last-child{padding-right:6px;border-right:0}
  td mt-icon{width:15px;height:15px;vertical-align:-3px;margin-right:5px}
  .alt td{background:#ebebeb}
  .sum td{background:#c8c8c8;font:bold 12px ${UI};border:0;white-space:pre}
  .sum td:last-child{padding-right:24px}
  td button{color:#888;font-size:12px;margin-left:7px;width:11px}
  small{color:#777;margin-left:8px;font-size:9px}
  tab-strip{margin-left:-1px}`,
  `<aside><button aria-label="Close"><svg><path d="M1 1l5 5M6 1L1 6"/></svg></button><span>Terminal</span></aside>
   <div class="pane"><div class="grid"><table><colgroup>${COLS.map(w => `<col style="width:${w}px">`).join('')}</colgroup>
   <thead><tr>${['Order <small>/</small>', 'Time', 'Type', 'Size', 'Symbol', 'Price', 'S / L', 'T / P', 'Price', 'Commission', 'Swap', 'Profit'].map(h => `<th>${h}</th>`).join('')}</tr></thead>
   <tbody>${[['72382920', '2024.02.21 16:32:58', '38423', '104.00'], ['72383175', '2024.02.21 16:35:18', '38414', '113.00']].map((r, i) => `<tr class="${i ? 'alt' : ''}"><td><mt-icon name="doc"></mt-icon>${r[0]}</td><td>${r[1]}</td><td>buy</td><td>1.00</td><td>u30usd</td><td>${r[2]}</td><td>0</td><td>0</td><td>38527</td><td>-0.20</td><td>0.00</td><td>${r[3]}<button aria-label="Close order">×</button></td></tr>`).join('')}
   <tr class="sum"><td colspan="11"><mt-icon name="balance"></mt-icon>Balance: 5 020.46 USD  Equity: 5 237.06  Margin: 153.67  Free margin: 5 083.39  Margin level: 3407.90%</td><td>216.60</td></tr></tbody></table></div>
   <tab-strip tight items="Trade|Exposure|Account History|News|Alerts|Mailbox#7|Market#117|Signals|Articles|Code Base|Experts|Journal"></tab-strip></div>`);

component('status-bar', `
  :host{display:grid;grid-template-columns:minmax(0,1fr) 117px 102px 70px 73px 72px 66px 66px 146px;height:20px;align-items:center;background:#f0f0f0;font:11px ${DATA};color:#111;padding-top:4px}
  span{height:16px;line-height:16px;border-left:1px solid #c4c4c4;padding-left:5px;white-space:nowrap;display:flex;align-items:center;gap:6px}
  span:first-of-type{border:0;padding:0}
  mt-icon{width:22px;height:16px}`,
  '<span>For Help, press F1</span><span>Default</span><span></span><span></span><span></span><span></span><span></span><span></span><span><mt-icon name="traffic"></mt-icon>223691/22 kb</span>');

component('trading-app', `
  :host{display:flex;flex-direction:column;height:100vh}
  main{display:grid;grid-template-columns:331px minmax(0,1fr);flex:none}
  .dock{display:grid;grid-template-rows:284px minmax(0,1fr);border-bottom:1px solid #a0a0a0;margin-bottom:3px}
  terminal-panel{flex:1;margin-top:1px}`,
  `<title-bar></title-bar><menu-bar></menu-bar><tool-bars></tool-bars>
   <main><div class="dock"><dock-panel kind="market" caption="Market Watch: 20:48:38" tabs="Symbols|Tick Chart"><market-watch></market-watch></dock-panel>
   <dock-panel kind="nav" caption="Navigator" tabs="Common|Favorites"><nav-tree></nav-tree></dock-panel></div>
   <mdi-area></mdi-area></main><terminal-panel></terminal-panel><status-bar></status-bar>`);
</script>
</body>
</html>
